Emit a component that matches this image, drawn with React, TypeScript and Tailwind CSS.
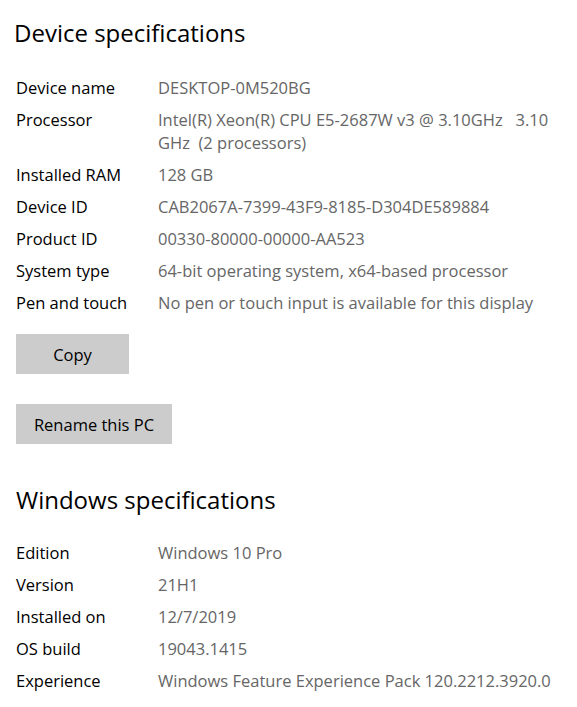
const device: [string, string[]][] = [
  ['Device name', ['DESKTOP-0M520BG']],
  ['Processor', ['Intel(R) Xeon(R) CPU E5-2687W v3 @ 3.10GHz   3.10', 'GHz  (2 processors)']],
  ['Installed RAM', ['128 GB']],
  ['Device ID', ['CAB2067A-7399-43F9-8185-D304DE589884']],
  ['Product ID', ['00330-80000-00000-AA523']],
  ['System type', ['64-bit operating system, x64-based processor']],
  ['Pen and touch', ['No pen or touch input is available for this display']],
];

const windows: [string, string[]][] = [
  ['Edition', ['Windows 10 Pro']],
  ['Version', ['21H1']],
  ['Installed on', ['12/7/2019']],
  ['OS build', ['19043.1415']],
  ['Experience', ['Windows Feature Experience Pack 120.2212.3920.0']],
];

function SpecRows({ rows }: { rows: [string, string[]][] }) {
  return (
    <div className="flex flex-col gap-[9px]">
      {rows.map(([label, lines]) => (
        <div key={label} className="flex text-[16.5px] leading-[23px]">
          <div className="w-[142px] shrink-0 text-black">{label}</div>
          <div className="whitespace-pre text-[#666666]">
            {lines.map((l) => (
              <div key={l}>{l}</div>
            ))}
          </div>
        </div>
      ))}
    </div>
  );
}

export default function App() {
  return (
    <main className="min-h-screen bg-white pl-4 font-['Open_Sans',sans-serif]">
      <h1 className="-ml-[2px] pt-[17px] text-[24px] font-normal leading-[32px] text-black">Device specifications</h1>
      <div className="mt-[27px]">
        <SpecRows rows={device} />
      </div>
      <button className="mt-[20px] block h-10 w-[113px] bg-[#cccccc] pt-[3px] text-[16.5px] text-black">Copy</button>
      <button className="mt-[30px] block h-10 w-[156px] bg-[#cccccc] pt-[2px] text-[16.5px] text-black">Rename this PC</button>
      <h2 className="mt-[40px] text-[24px] font-normal leading-[32px] text-black">Windows specifications</h2>
      <div className="mt-[25px]">
        <SpecRows rows={windows} />
      </div>
    </main>
  );
}
